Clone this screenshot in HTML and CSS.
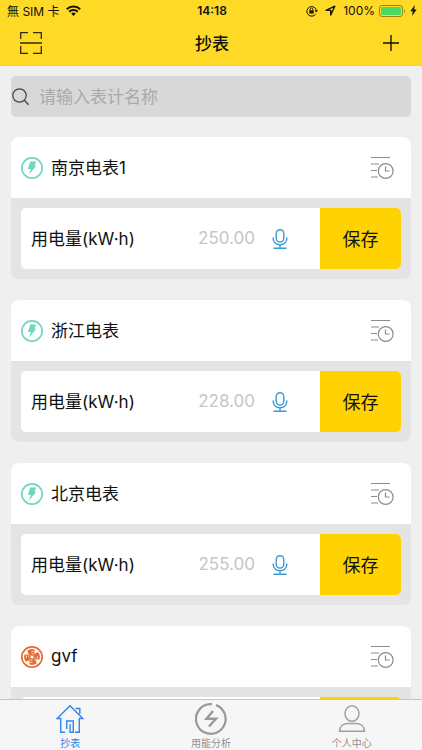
FILE: index.html
```html
<!DOCTYPE html>
<html lang="zh-CN">
<head>
<meta charset="utf-8">
<meta name="viewport" content="width=device-width, initial-scale=1">
<title>抄表</title>
<link rel="stylesheet" href="styles.css">
</head>
<body>
<svg class="sprite" aria-hidden="true">
  <symbol id="bolt" viewBox="0 0 24 24">
    <circle cx="12" cy="12" r="10.2" fill="none" stroke="#71d6bf" stroke-width="1.7"/>
    <path d="M10.200 5.500h6l-1.800 4.300h2L8.800 18.800l2-5.800H7.900z" fill="#71d6bf"/>
  </symbol>
  <symbol id="meter" viewBox="0 0 24 24">
    <circle cx="12" cy="12" r="10.2" fill="none" stroke="#ea6a35" stroke-width="1.7"/>
    <g fill="#ea6a35">
      <path id="blade" d="M9 10.300 7.200 5.800A8 8 0 0 1 14.500 4.500v4.300L12 8.600z"/>
      <use href="#blade" transform="rotate(90 12 12)"/>
      <use href="#blade" transform="rotate(180 12 12)"/>
      <use href="#blade" transform="rotate(270 12 12)"/>
    </g>
    <circle cx="12" cy="12" r="2.300" fill="none" stroke="#ea6a35" stroke-width="1.500"/>
    <path d="M11.500 6.500h2M17.500 11.500v2M12.500 17.500h-2M6.500 12.500v-2" stroke="#fff" stroke-width=".8"/>
  </symbol>
  <symbol id="history" viewBox="0 0 24 24">
    <g fill="none" stroke="#8c8c8c" stroke-width="1.2">
      <path d="M1 1.500h19M1 8h8M1 14.500h6M1 21h7"/>
      <circle cx="15.700" cy="15" r="7.400"/>
      <path d="M15.500 10.500V15h4"/>
    </g>
  </symbol>
  <symbol id="mic" viewBox="0 0 16 20">
    <g fill="none" stroke="#3d9ad1" stroke-width="1.4">
      <rect x="4.200" y=".7" width="7.600" height="12.300" rx="3.800"/>
      <path d="M1.200 8.500v1a6.800 6.300 0 0 0 13.600 0v-1M8 15.800v3.200M1.500 19.200h13"/>
    </g>
  </symbol>
</svg>

<header class="top">
  <div class="status">
    <div class="status-side">
      <span>無 SIM 卡</span>
      <svg width="15" height="11" viewBox="0 0 15 11" aria-hidden="true"><g fill="none" stroke="#171300" stroke-width="2"><path d="M.8 4.200a9.600 9.600 0 0 1 13.400 0M3.200 6.800a6.200 6.200 0 0 1 8.600 0"/></g><path d="M5.200 8.600a3.300 3.300 0 0 1 4.600 0L7.500 11z" fill="#171300"/></svg>
    </div>
    <span class="time">14:18</span>
    <div class="status-side status-right">
      <svg width="12" height="12" viewBox="0 0 12 12" aria-hidden="true"><path d="M9.700 9A4.800 4.800 0 1 1 10.400 5.500" fill="none" stroke="#171300"/><path d="M8.600 5.200h3.400l-1.700 2.400z" fill="#171300"/><rect x="3.300" y="5.300" width="4.400" height="3.200" fill="#171300"/><path d="M4.200 5.500V4.300a1.300 1.300 0 0 1 2.600 0v1.200" fill="none" stroke="#171300" stroke-width=".9"/></svg>
      <svg class="arrow" width="11" height="11" viewBox="0 0 11 11" aria-hidden="true"><path d="M1 5.400 9.800 1.200 5.700 10V5.400z" fill="none" stroke="#171300" stroke-width="1.400" stroke-linejoin="round"/></svg>
      <span>100%</span>
      <svg width="27" height="12" viewBox="0 0 27 12" aria-hidden="true"><rect x=".5" y=".5" width="23" height="11" rx="2.500" fill="none" stroke="#9b8318"/><rect x="2" y="2" width="20" height="8" rx="1" fill="#4cd964"/><path d="M25 4a2.500 2.500 0 0 1 0 4z" fill="#9b8318"/></svg>
      <svg width="7" height="11" viewBox="0 0 7 11" aria-hidden="true"><path d="M4.800 0 .3 6.200h2.500L2 11l4.700-6.500H4.200z" fill="#171300"/></svg>
    </div>
  </div>
  <div class="nav">
    <button class="icon-button" aria-label="扫一扫"><svg width="22" height="22" viewBox="0 0 22 22"><path d="M.7 7V.7H8M13 .7h8.300V7M.7 14v7.300H8M13 21.300h8.300V14M0 11h22" fill="none" stroke="#332b05" stroke-width="1.300"/></svg></button>
    <h1>抄表</h1>
    <button class="icon-button" aria-label="添加"><svg width="18" height="18" viewBox="0 0 18 18"><path d="M9 1v16M1 9h16" fill="none" stroke="#171300" stroke-width="1.400"/></svg></button>
  </div>
</header>

<main class="content">
  <label class="search">
    <svg width="18" height="18" viewBox="0 0 18 18" aria-hidden="true"><circle cx="7.500" cy="7.500" r="6.700" fill="none" stroke="#444" stroke-width="1.200"/><path d="m12.300 12.300 4.400 4.400" stroke="#444" stroke-width="1.400"/></svg>
    <input type="search" placeholder="请输入表计名称" aria-label="请输入表计名称">
  </label>

  <section class="card">
    <div class="card-head">
      <svg class="type"><use href="#bolt"/></svg>
      <h2>南京电表1</h2>
      <button class="icon-button" aria-label="历史记录"><svg class="history"><use href="#history"/></svg></button>
    </div>
    <form class="card-body">
      <label for="m1">用电量(kW·h)</label>
      <input id="m1" type="text" inputmode="decimal" placeholder="250.00">
      <button type="button" class="icon-button" aria-label="语音输入"><svg class="mic"><use href="#mic"/></svg></button>
      <button type="button" class="save">保存</button>
    </form>
  </section>

  <section class="card">
    <div class="card-head">
      <svg class="type"><use href="#bolt"/></svg>
      <h2>浙江电表</h2>
      <button class="icon-button" aria-label="历史记录"><svg class="history"><use href="#history"/></svg></button>
    </div>
    <form class="card-body">
      <label for="m2">用电量(kW·h)</label>
      <input id="m2" type="text" inputmode="decimal" placeholder="228.00">
      <button type="button" class="icon-button" aria-label="语音输入"><svg class="mic"><use href="#mic"/></svg></button>
      <button type="button" class="save">保存</button>
    </form>
  </section>

  <section class="card">
    <div class="card-head">
      <svg class="type"><use href="#bolt"/></svg>
      <h2>北京电表</h2>
      <button class="icon-button" aria-label="历史记录"><svg class="history"><use href="#history"/></svg></button>
    </div>
    <form class="card-body">
      <label for="m3">用电量(kW·h)</label>
      <input id="m3" type="text" inputmode="decimal" placeholder="255.00">
      <button type="button" class="icon-button" aria-label="语音输入"><svg class="mic"><use href="#mic"/></svg></button>
      <button type="button" class="save">保存</button>
    </form>
  </section>

  <section class="card">
    <div class="card-head">
      <svg class="type"><use href="#meter"/></svg>
      <h2>gvf</h2>
      <button class="icon-button" aria-label="历史记录"><svg class="history"><use href="#history"/></svg></button>
    </div>
    <form class="card-body">
      <input type="text" inputmode="decimal" aria-label="读数">
      <button type="button" class="save" aria-label="保存"></button>
    </form>
  </section>
</main>

<nav class="tabs">
  <a class="tab active" href="#read" aria-current="page">
    <svg width="28" height="32" viewBox="0 0 28 32" aria-hidden="true"><path d="M9 29.300H4.700V15.500H1.200L14 2.800l12.800 12.700h-3.500v13.800H19M19.500 5.500h4.300V11M10.700 26v-8h6.600v11.300h-3.200V21" fill="none" stroke="#2f86e8" stroke-width="1.400"/></svg>
    <span>抄表</span>
  </a>
  <a class="tab" href="#analysis">
    <svg width="32" height="32" viewBox="0 0 32 32" aria-hidden="true"><path d="M21 2.100a14.800 14.800 0 1 1-4-.9" fill="none" stroke="#999" stroke-width="2.200"/><path d="m18 8-6.500 7.800h9.500L14 23.500" fill="none" stroke="#999" stroke-width="2.400"/></svg>
    <span>用能分析</span>
  </a>
  <a class="tab" href="#me">
    <svg width="28" height="32" viewBox="0 0 28 32" aria-hidden="true"><g fill="none" stroke="#a0a0a0" stroke-width="1.500"><ellipse cx="14" cy="10.500" rx="7" ry="7.700"/><path d="M1.500 28.300c0-5 3.500-7.800 8.500-7.800h8c5 0 8.500 2.800 8.500 7.800z"/></g></svg>
    <span>个人中心</span>
  </a>
</nav>
</body>
</html>
```
FILE: styles.css
```css
* {
  box-sizing: border-box;
}

body {
  margin: 0;
  height: 100vh;
  display: flex;
  flex-direction: column;
  background: #efefef;
  color: #111;
  font-family: Inter, "Noto Sans CJK SC", sans-serif;
}

.sprite {
  display: none;
}

svg {
  display: block;
  flex: none;
}

button,
input {
  margin: 0;
  padding: 0;
  border: 0;
  background: none;
  color: inherit;
  font: inherit;
}

input {
  flex: 1;
  min-width: 0;
  outline: 0;
}

input::placeholder {
  color: #c5c5ca;
  opacity: 1;
}

h1,
h2 {
  margin: 0;
}

.top {
  flex: none;
  background: #fed925;
  border-bottom: 1px solid #d9cf98;
}

.status {
  display: flex;
  align-items: center;
  height: 21px;
  padding: 0 5px 0 7px;
  font-size: 12px;
}

.status-side {
  flex: 1;
  display: flex;
  align-items: center;
  gap: 6px;
}

.status-right {
  justify-content: flex-end;
  gap: 4px;
}

.arrow {
  margin: 0 3px;
}

.time {
  font-weight: 600;
}

.nav {
  display: flex;
  align-items: center;
  justify-content: space-between;
  height: 44px;
  padding: 0 22px 0 20px;
}

.nav h1 {
  padding-bottom: 2px;
  font-size: 17px;
  font-weight: 500;
}

.content {
  flex: 1;
  min-height: 0;
  overflow: hidden;
  padding: 10px 11px 0;
}

.search {
  display: flex;
  align-items: center;
  gap: 9px;
  height: 41px;
  padding: 0 2px 0 1px;
  border-radius: 5px;
  background: #d8d8d8;
  font-size: 17px;
}

.search input::placeholder {
  color: #a9a9ae;
}

.card {
  margin-top: 20px;
  border-radius: 8px;
  background: #e4e4e4;
  overflow: hidden;
}

.card + .card {
  margin-top: 21px;
}

.card-head {
  display: flex;
  align-items: center;
  gap: 7px;
  height: 61px;
  padding: 0 17px 0 9px;
  background: #fff;
}

.card-head h2 {
  flex: 1;
  padding-bottom: 2px;
  font-size: 17px;
  font-weight: 400;
}

.type,
.history {
  width: 24px;
  height: 24px;
}

.card-body {
  display: flex;
  align-items: center;
  height: 61px;
  margin: 10px;
  padding-left: 10px;
  border-radius: 5px;
  background: #fff;
  font-size: 17px;
  overflow: hidden;
}

.card-body label,
.card-body input,
.save {
  padding-bottom: 2px;
}

.card-body input {
  text-align: right;
}

.mic {
  width: 16px;
  height: 20px;
  margin: 0 32px 0 17px;
}

.save {
  align-self: stretch;
  width: 81px;
  background: #ffd203;
  font-size: 18px;
}

.tabs {
  flex: none;
  display: flex;
  height: 51px;
  border-top: 1px solid #c4c4c4;
  background: #f6f6f6;
}

.tab {
  flex: 1;
  display: flex;
  flex-direction: column;
  align-items: center;
  padding-top: 3px;
  color: #909090;
  font-size: 10px;
  line-height: 16px;
  text-decoration: none;
}

.active {
  color: #2f86e8;
}
```
